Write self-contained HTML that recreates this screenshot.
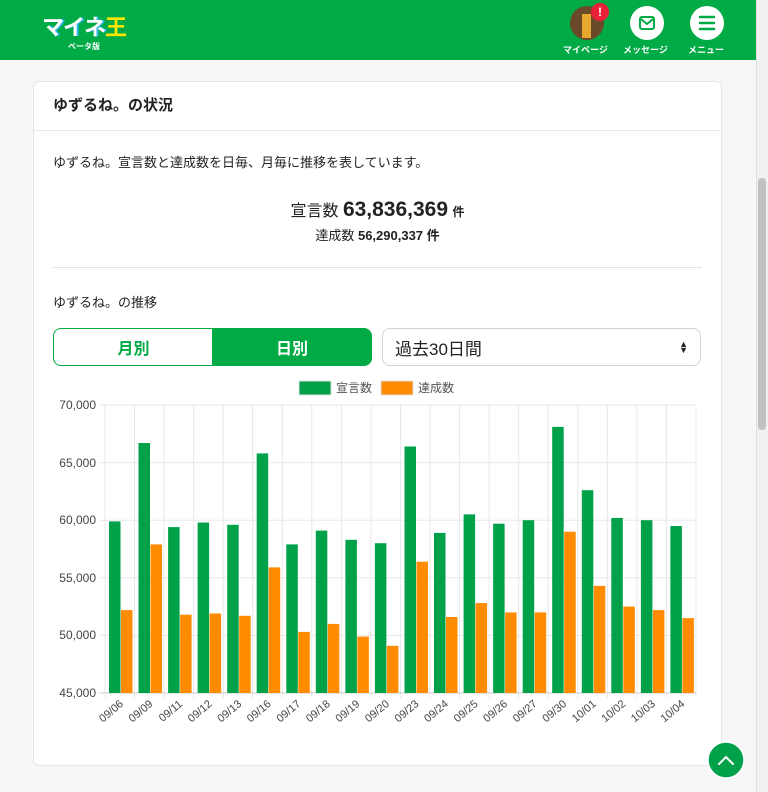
<!DOCTYPE html>
<html><head><meta charset="utf-8">
<style>
*{box-sizing:border-box;margin:0;padding:0}
body{width:768px;height:792px;overflow:hidden;background:#f7f7f7;font-family:"Liberation Sans","Noto Sans CJK JP",sans-serif;color:#222;position:relative}
.hdr{position:absolute;left:0;top:0;width:756px;height:60px;background:#00aa45}
.sb{position:absolute;left:756px;top:0;width:12px;height:792px;background:#f0f0f0;border-left:1px solid #e0e0e0}
.thumb{position:absolute;left:758px;top:178px;width:8px;height:252px;background:#c1c1c1;border-radius:4px}
.logo{position:absolute;left:42px;top:10px;font-weight:bold;font-size:22px;color:#fff;letter-spacing:-1px}
.beta{position:absolute;left:68px;top:41px;font-size:8px;color:#fff;font-weight:bold}
.nav{position:absolute;top:6px;width:34px;height:34px;border-radius:50%;background:#fff}
.navl{position:absolute;top:43px;font-size:9px;color:#fff;font-weight:bold;white-space:nowrap}
.card{position:absolute;left:33px;top:81px;width:689px;height:685px;background:#fff;border:1px solid #e6e6e6;border-radius:6px}
.ch{height:49px;border-bottom:1px solid #e8e8e8;padding:12px 19px;font-size:15px;font-weight:bold}
.btn{position:absolute;top:246px;height:38px;font-size:16px;font-weight:bold;display:flex;align-items:center;justify-content:center}
</style></head><body>
<div class="hdr"></div>
<div class="logo"><span style="color:#fff;text-shadow:2px 0 #2bb5f0">マイネ</span><span style="color:#ffe600">王</span></div>
<div class="beta">ベータ版</div>
<div class="nav" style="left:570px;background:#6b4a2a;overflow:hidden"><div style="position:absolute;left:12px;top:8px;width:9px;height:24px;background:#e8a830"></div></div>
<div style="position:absolute;left:591px;top:3px;width:18px;height:18px;border-radius:50%;background:#e8203a;color:#fff;font-size:12px;font-weight:bold;text-align:center;line-height:18px">!</div>
<div class="navl" style="left:563px">マイページ</div>
<div class="nav" style="left:630px"><svg width="34" height="34"><rect x="10" y="11" width="14" height="12" rx="2" fill="none" stroke="#00aa45" stroke-width="2"/><path d="M11 13l6 5 6-5" fill="none" stroke="#00aa45" stroke-width="2"/></svg></div>
<div class="navl" style="left:623px">メッセージ</div>
<div class="nav" style="left:690px"><svg width="34" height="34"><path d="M10 11h14M10 17h14M10 23h14" stroke="#00aa45" stroke-width="2.5" stroke-linecap="round"/></svg></div>
<div class="navl" style="left:688px">メニュー</div>
<div class="sb"></div><div class="thumb"></div>

<div class="card">
<div class="ch">ゆずるね。の状況</div>
<div style="position:absolute;left:19px;top:70px;font-size:13px">ゆずるね。宣言数と達成数を日毎、月毎に推移を表しています。</div>
<div style="position:absolute;left:0;width:100%;top:115px;text-align:center;font-size:16px">宣言数 <b style="font-size:21px">63,836,369</b> <b style="font-size:12px">件</b></div>
<div style="position:absolute;left:0;width:100%;top:143px;text-align:center;font-size:13px">達成数 <b>56,290,337 件</b></div>
<div style="position:absolute;left:19px;right:19px;top:185px;border-top:1px solid #e3e3e3"></div>
<div style="position:absolute;left:19px;top:210px;font-size:13px">ゆずるね。の推移</div>
<div class="btn" style="left:19px;width:160px;border:1px solid #00aa45;border-radius:8px 0 0 8px;color:#00aa45;border-right:none">月別</div>
<div class="btn" style="left:178px;width:160px;background:#00aa45;color:#fff;border-radius:0 8px 8px 0">日別</div>
<div class="btn" style="left:348px;width:319px;border:1px solid #ccd5d5;border-radius:8px;justify-content:flex-start;padding-left:12px;font-weight:normal;font-size:17px">過去30日間<span style="position:absolute;right:12px;font-size:9px;line-height:6px">▲<br>▼</span></div>
</div>

<svg style="position:absolute;left:0;top:0" width="756" height="792" font-family="Liberation Sans, Noto Sans CJK JP, sans-serif">
<rect x="299" y="381" width="32" height="14" fill="#00a149" stroke="#ddd"/><text x="336" y="392" font-size="12" fill="#555">宣言数</text>
<rect x="381" y="381" width="32" height="14" fill="#ff8c00" stroke="#ddd"/><text x="418" y="392" font-size="12" fill="#555">達成数</text>
<g stroke="#e8e8e8" stroke-width="1">
<path d="M100 405H696M100 462.6H696M100 520.2H696M100 577.8H696M100 635.4H696"/>
<path d="M105 405V698M134.5 405V698M164.1 405V698M193.6 405V698M223.2 405V698M252.7 405V698M282.3 405V698M311.8 405V698M341.4 405V698M370.9 405V698M400.5 405V698M430 405V698M459.6 405V698M489.1 405V698M518.7 405V698M548.2 405V698M577.8 405V698M607.3 405V698M636.9 405V698M666.4 405V698M696 405V698"/>
</g>
<path d="M100 693H696" stroke="#ccc"/>
<g font-size="12" fill="#444" text-anchor="end">
<text x="96" y="409">70,000</text><text x="96" y="467">65,000</text><text x="96" y="524">60,000</text><text x="96" y="582">55,000</text><text x="96" y="639">50,000</text><text x="96" y="697">45,000</text>
</g>
<g fill="#00a149">
<rect x="109" y="521.4" width="11.5" height="171.6"/><rect x="138.5" y="443" width="11.5" height="250"/><rect x="168.1" y="527.1" width="11.5" height="165.9"/><rect x="197.6" y="522.5" width="11.5" height="170.5"/><rect x="227.2" y="524.8" width="11.5" height="168.2"/><rect x="256.7" y="453.4" width="11.5" height="239.6"/><rect x="286.3" y="544.4" width="11.5" height="148.6"/><rect x="315.8" y="530.6" width="11.5" height="162.4"/><rect x="345.4" y="539.8" width="11.5" height="153.2"/><rect x="374.9" y="543.2" width="11.5" height="149.8"/><rect x="404.5" y="446.5" width="11.5" height="246.5"/><rect x="434" y="532.9" width="11.5" height="160.1"/><rect x="463.6" y="514.4" width="11.5" height="178.6"/><rect x="493.1" y="523.7" width="11.5" height="169.3"/><rect x="522.7" y="520.2" width="11.5" height="172.8"/><rect x="552.2" y="426.9" width="11.5" height="266.1"/><rect x="581.8" y="490.2" width="11.5" height="202.8"/><rect x="611.3" y="517.9" width="11.5" height="175.1"/><rect x="640.9" y="520.2" width="11.5" height="172.8"/><rect x="670.4" y="526" width="11.5" height="167"/>
</g>
<g fill="#ff8c00">
<rect x="121" y="610.1" width="11.5" height="82.9"/><rect x="150.5" y="544.4" width="11.5" height="148.6"/><rect x="180.1" y="614.7" width="11.5" height="78.3"/><rect x="209.6" y="613.5" width="11.5" height="79.5"/><rect x="239.2" y="615.8" width="11.5" height="77.2"/><rect x="268.7" y="567.4" width="11.5" height="125.6"/><rect x="298.3" y="631.9" width="11.5" height="61.1"/><rect x="327.8" y="623.9" width="11.5" height="69.1"/><rect x="357.4" y="636.6" width="11.5" height="56.4"/><rect x="386.9" y="645.8" width="11.5" height="47.2"/><rect x="416.5" y="561.7" width="11.5" height="131.3"/><rect x="446" y="617" width="11.5" height="76"/><rect x="475.6" y="603.1" width="11.5" height="89.9"/><rect x="505.1" y="612.4" width="11.5" height="80.6"/><rect x="534.7" y="612.4" width="11.5" height="80.6"/><rect x="564.2" y="531.7" width="11.5" height="161.3"/><rect x="593.8" y="585.9" width="11.5" height="107.1"/><rect x="623.3" y="606.6" width="11.5" height="86.4"/><rect x="652.9" y="610.1" width="11.5" height="82.9"/><rect x="682.4" y="618.1" width="11.5" height="74.9"/>
</g>
<g font-size="11" fill="#444" text-anchor="end">
<text transform="translate(124,705) rotate(-40)">09/06</text><text transform="translate(153.5,705) rotate(-40)">09/09</text><text transform="translate(183.1,705) rotate(-40)">09/11</text><text transform="translate(212.6,705) rotate(-40)">09/12</text><text transform="translate(242.2,705) rotate(-40)">09/13</text><text transform="translate(271.7,705) rotate(-40)">09/16</text><text transform="translate(301.3,705) rotate(-40)">09/17</text><text transform="translate(330.8,705) rotate(-40)">09/18</text><text transform="translate(360.4,705) rotate(-40)">09/19</text><text transform="translate(389.9,705) rotate(-40)">09/20</text><text transform="translate(419.5,705) rotate(-40)">09/23</text><text transform="translate(449,705) rotate(-40)">09/24</text><text transform="translate(478.6,705) rotate(-40)">09/25</text><text transform="translate(508.1,705) rotate(-40)">09/26</text><text transform="translate(537.7,705) rotate(-40)">09/27</text><text transform="translate(567.2,705) rotate(-40)">09/30</text><text transform="translate(596.8,705) rotate(-40)">10/01</text><text transform="translate(626.3,705) rotate(-40)">10/02</text><text transform="translate(655.9,705) rotate(-40)">10/03</text><text transform="translate(685.4,705) rotate(-40)">10/04</text>
</g>
<circle cx="726" cy="760" r="18" fill="#00a149" stroke="#fff" stroke-width="1.5"/>
<path d="M719 764l7-7 7 7" fill="none" stroke="#fff" stroke-width="2" stroke-linecap="round"/>
</svg>
</body></html>
